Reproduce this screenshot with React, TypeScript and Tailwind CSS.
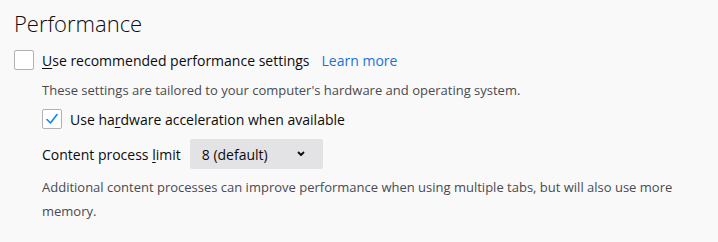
export default function App() {
  return (
    <div className="w-[718px] h-[242px] bg-[#f9f9fa] text-[#0c0c0d] font-['Open_Sans',sans-serif] overflow-hidden">
      <div className="pl-[14px] pt-[8px]">
        <h2 className="text-[22px] font-light leading-[30px] text-[#0c0c0d]">Performance</h2>

        <div className="mt-[12px] flex items-center h-[20px]">
          <span className="w-[20px] h-[20px] rounded-[2px] border border-[#b1b1b3] bg-white" />
          <span className="ml-[8px] text-[14px]">
            <span className="underline underline-offset-2">U</span>se recommended performance settings
          </span>
          <a className="ml-[12px] text-[14px] text-[#1a73d6]">Learn more</a>
        </div>

        <div className="pl-[28px]">
          <p className="mt-[10px] text-[13px] text-[#4a4a4f] leading-[20px]">
            These settings are tailored to your computer's hardware and operating system.
          </p>

          <div className="mt-[9px] flex items-center h-[20px]">
            <span className="w-[20px] h-[20px] rounded-[2px] border border-[#b1b1b3] bg-white flex items-center justify-center">
              <svg width="14" height="14" viewBox="0 0 14 14" fill="none">
                <path d="M2 7.5 L5.5 11 L12 2.5" stroke="#0a84ff" strokeWidth="1.6" strokeLinecap="round" strokeLinejoin="round" />
              </svg>
            </span>
            <span className="ml-[8px] text-[14px]">
              Use ha<span className="underline underline-offset-2">r</span>dware acceleration when available
            </span>
          </div>

          <div className="mt-[10px] flex items-center">
            <span className="text-[14px]">
              Content process <span className="underline underline-offset-2">l</span>imit
            </span>
            <div className="ml-[9px] w-[133px] h-[30px] rounded-[2px] bg-[#e3e3e5] flex items-center pl-[12px] pr-[17px] justify-between text-[14px]">
              <span>8 (default)</span>
              <svg width="10" height="10" viewBox="0 0 10 10" fill="none">
                <path d="M2.5 3.5 L5 6 L7.5 3.5" stroke="#0c0c0d" strokeWidth="1.8" strokeLinecap="round" strokeLinejoin="round" />
              </svg>
            </div>
          </div>

          <p className="mt-[6px] text-[13px] text-[#4a4a4f] leading-[24px] w-[650px]">
            Additional content processes can improve performance when using multiple tabs, but will also use more memory.
          </p>
        </div>
      </div>
    </div>
  )
}
